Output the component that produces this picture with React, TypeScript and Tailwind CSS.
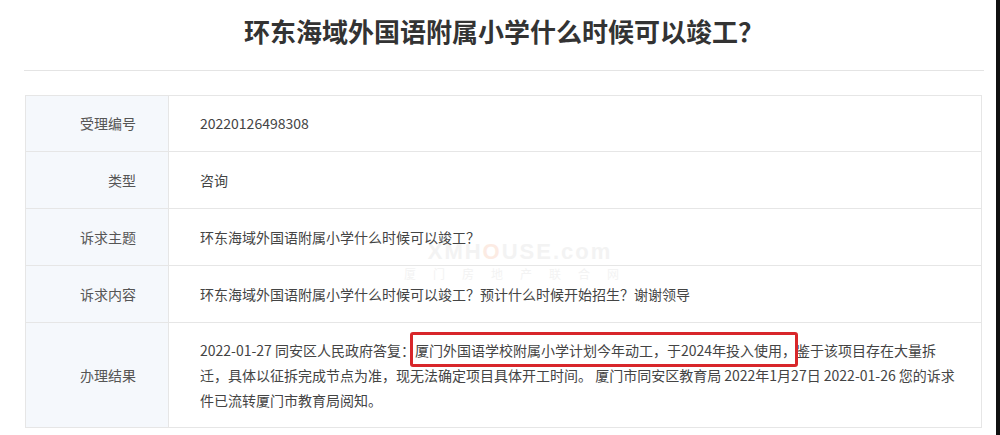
const rows: { label: string; value: React.ReactNode; h: string }[] = [
  { label: "受理编号", value: "20220126498308", h: "h-[56px]" },
  { label: "类型", value: "咨询", h: "h-[57px]" },
  { label: "诉求主题", value: "环东海域外国语附属小学什么时候可以竣工？", h: "h-[57px]" },
  { label: "诉求内容", value: "环东海域外国语附属小学什么时候可以竣工？预计什么时候开始招生？谢谢领导", h: "h-[57px]" },
  {
    label: "办理结果",
    h: "h-[105px]",
    value: (
      <>
        2022-01-27 同安区人民政府答复：
        <span className="relative">
          厦门外国语学校附属小学计划今年动工，于2024年投入使用，
          <span className="absolute -left-[5px] -right-[2px] -top-[8px] -bottom-[7px] rounded-[3px] border-[3px] border-[#d8262a]" />
        </span>
        鉴于该项目存在大量拆
        <br />
        迁，具体以征拆完成节点为准，现无法确定项目具体开工时间。 厦门市同安区教育局 2022年1月27日 2022-01-26 您的诉求
        <br />
        件已流转厦门市教育局阅知。
      </>
    ),
  },
];

export default function App() {
  return (
    <div
      className="flex h-[435px] w-[1000px] bg-white"
      style={{ fontFamily: '"Noto Sans CJK SC", "Noto Sans", sans-serif' }}
    >
      <div className="flex-1 pl-[24px] pr-[12px]">
        <div className="flex h-[71px] items-center justify-center border-b border-[#e4e4e4] pb-[10px]">
          <h1 className="text-[26px] font-bold text-[#333]">环东海域外国语附属小学什么时候可以竣工？</h1>
        </div>

        <div className="relative ml-[1px] mr-[2px] mt-[24px] border-x border-b border-[#e6e6e6]">
          {/* watermark, drawn under the rows */}
          <div className="pointer-events-none absolute left-[378px] top-[146px] flex flex-col items-center leading-none text-[#f3f3f3]">
            <span className="text-[22px] font-bold tracking-[2px]" style={{ fontFamily: '"Liberation Sans", sans-serif' }}>
              XMH<span className="text-[#fcebe3]">O</span>USE.com
            </span>
            <span className="mt-[5px] text-[12px] tracking-[17px]">厦门房地产联合网</span>
          </div>

          {rows.map((row) => (
            <div key={row.label} className={`relative flex border-t border-[#e6e6e6] ${row.h}`}>
              <div className="flex w-[143px] shrink-0 items-center justify-end border-r border-[#e6e6e6] bg-[#f5f8fc] pr-[32px] text-[14px] text-[#555]">
                {row.label}
              </div>
              <div className="flex flex-1 items-center pl-[31px] text-[14px] leading-[25px] text-[#444]">
                <p>{row.value}</p>
              </div>
            </div>
          ))}
        </div>
      </div>
      <div className="w-[4px] bg-[#111]" />
    </div>
  );
}
